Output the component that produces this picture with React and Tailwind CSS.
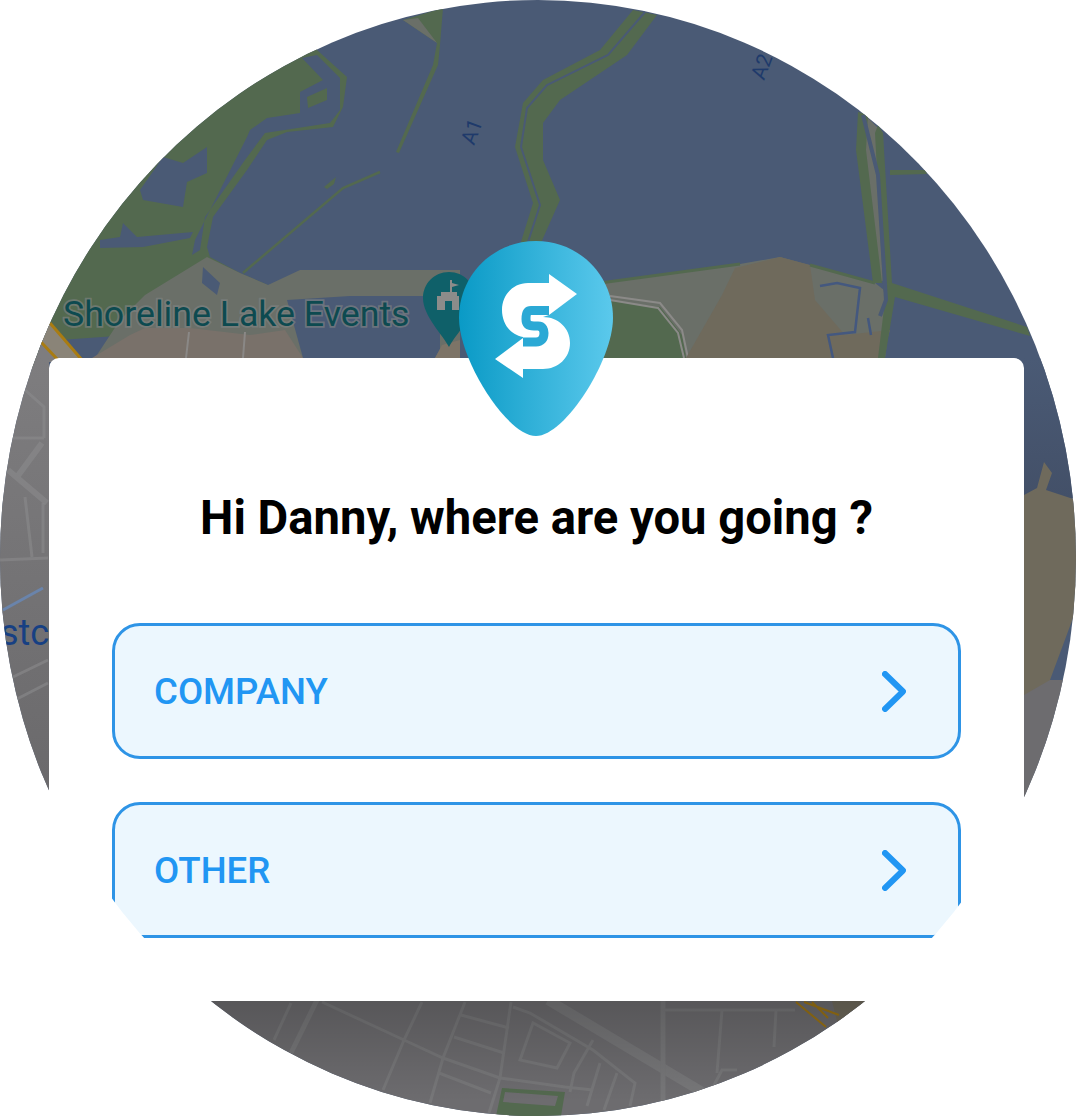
const WATER = '#4a5a75';
const GREEN = '#53694f';
const LAND = '#6a6f68';
const TAN = '#6f6a5c';
const GREY = '#6d6c6f';
const ROAD = '#777779';

function MapLayer() {
  return (
    <svg className="absolute inset-0" width="1076" height="1116" viewBox="0 0 1076 1116">
      <defs>
        <clipPath id="outsideCard">
          <path clipRule="evenodd" d="M0 0H1076V1116H0ZM49 370H1024V1001H49Z" />
        </clipPath>
        <linearGradient id="leftShade" x1="0" y1="0" x2="0" y2="1">
          <stop offset="0" stopColor="#7e7d7f" />
          <stop offset="1" stopColor="#6a696b" />
        </linearGradient>
        <linearGradient id="bottomShade" x1="0" y1="0" x2="0" y2="1">
          <stop offset="0" stopColor="#000" stopOpacity="0.2" />
          <stop offset="1" stopColor="#000" stopOpacity="0" />
        </linearGradient>
        <linearGradient id="rightShade" x1="0" y1="0" x2="0" y2="1">
          <stop offset="0" stopColor={WATER} />
          <stop offset="1" stopColor="#435068" />
        </linearGradient>
      </defs>

      <g clipPath="url(#outsideCard)">
        <rect width="1076" height="1116" fill={WATER} />
        <rect x="1024" y="358" width="52" height="140" fill="url(#rightShade)" />

        {/* upper left marsh */}
        <path fill={GREEN} d="M0 0H317V50L347 77L343 107L333 127L287 132L267 140L247 170L213 217L207 247L210 257L240 273L268 285L200 330L60 340L0 400Z" />
        <path fill={WATER} d="M302 58L323 80L300 92V113L267 118L250 130L247 137L215 200L195 240L192 255L200 250L205 217L245 160L265 133L330 123L340 110L340 78L317 55Z" />
        <path fill={GREEN} d="M307 97L327 88L327 100L308 108Z" />
        <path fill={WATER} d="M140 190L163 157L183 163L207 147V173L187 182L183 207L143 200Z" />
        <path fill={WATER} d="M100 240L120 237L123 223L137 237L193 232L190 238L143 247L100 248Z" />

        {/* channels */}
        <path fill={GREEN} d="M633 10L600 50L543 80L523 103L515 147L533 203L520 245H540L560 200L543 160L543 123L560 100L627 55L657 15Z" />
        <path fill="none" stroke={WATER} strokeWidth="2" d="M645 12L608 55L547 85L527 108L521 147L540 205L527 245" />
        <path fill={GREEN} d="M403 20L443 8L440 45L438 65L399 153L396 152L433 65L437 43Z" />
        <path fill={LAND} d="M403 20L418 18L437 43Z" />
        <path fill="none" stroke={GREEN} strokeWidth="2.5" d="M380 172L343 188L243 273" />
        <path fill={GREEN} d="M324 187L336 177L334 184L327 189Z" />

        {/* shore */}
        <path fill={LAND} d="M207 257L240 273L268 285L300 270L460 270V358H95L120 320L145 295Z" />
        <path fill={WATER} d="M203 267L220 283L217 295L202 283Z" />
        <path fill="#79716a" d="M92 358L130 335L145 328L190 328L250 335L285 330L303 358Z" />
        <path fill={WATER} d="M287 300L350 296L440 296V350L435 358H303Z" />
        <path fill="#7d7467" d="M435 358L442 345L460 340V358Z" />
        <path fill="none" stroke="#8a8886" strokeWidth="2" d="M189 332L186 358M245 332L243 358" />

        <path fill="#7e7d7f" d="M0 320L50 323L85 362H0Z" />
        <path fill="#8a8478" d="M50 323L82 360H58L41 342Z" />
        <path fill="none" stroke="#a97c12" strokeWidth="3" d="M50 323L82 360M41 342L58 360" />

        {/* right of the logo */}
        <path fill={LAND} d="M600 283L740 264L780 257L875 283L893 297L885 358H600Z" />
        <path fill={GREEN} d="M606 300L660 307L682 335L686 358H600Z" />
        <path fill="none" stroke="#8b8a88" strokeWidth="2" d="M610 296L660 303L682 330L688 358" />
        <path fill="none" stroke="#8b8a88" strokeWidth="2" d="M610 300L658 308L678 333L684 358" />
        <path fill={TAN} d="M686 358L722 295L735 268L780 257L810 265L815 300L845 335L890 330L882 358Z" />
        <path fill="none" stroke={GREEN} strokeWidth="3" d="M600 283L740 264M810 265L875 283" />
        <path fill={LAND} d="M865 115L883 133L885 280L875 283L865 180Z" />
        <path fill={GREEN} d="M858 112L856 150L873 283L882 283L866 150L868 115Z" />
        <path fill={GREEN} d="M878 125L883 133L892 283L1027 327L1030 336L895 297L885 358H878L885 300L883 285L875 133Z" />
        <path fill="none" stroke={WATER} strokeWidth="4" d="M863 115L878 175L886 300L880 316" />
        <path fill={GREEN} d="M890 170L925 170L927 174L890 175Z" />
        <path fill="none" stroke="#44587f" strokeWidth="2.5" d="M820 286L837 283L860 288L855 332L828 335L833 358M868 318L871 335" />

        {/* right edge beside the card */}
        <path fill={GREY} d="M1024 680H1076V1116H1024Z" />
        <path fill={TAN} d="M1024 495L1037 488L1044 462L1052 473L1046 490L1076 500V610L1050 680L1024 695Z" />

        {/* left edge */}
        <path fill="url(#leftShade)" d="M0 358H49V800H0Z" />
        <g fill="none" stroke="#8a8a8c" strokeOpacity="0.6">
          <path strokeWidth="6" d="M8 470L47 503M42 443L17 477" />
          <path strokeWidth="3" d="M25 390L44 407V438M10 438H44M25 497L32 557M43 503V553M0 560L48 558M13 677L48 660M15 700L48 683" />
        </g>
        <path fill="none" stroke="#6a84ab" strokeWidth="3" d="M3 610L43 588" />

        {/* bottom streets */}
        <rect x="0" y="1001" width="1076" height="115" fill={GREY} />
        <g fill="none" stroke={ROAD}>
          <path strokeWidth="10" d="M548 1000L704 1093" />
          <path strokeWidth="5" d="M663 1000V1106M317 1000L291 1053" />
          <path strokeWidth="3" d="M663 1010H795M722 1010L717 1073M776 1010L774 1047M713 1087L722 1070H737M322 1002L404 1040L443 1058L500 1078L565 1087L593 1090M422 1002L404 1040L383 1090M465 1002L443 1058L430 1103M511 1002L500 1078L489 1113M461 1015L509 1028M454 1037L504 1053M439 1073L491 1093M513 1007L530 1013L593 1050L635 1083L630 1106M533 1023L520 1060L557 1068L570 1043ZM593 1040L574 1073L570 1092M600 1063L587 1106M617 1073L604 1110M291 1003L274 1040" />
        </g>
        <path fill={GREEN} fillRule="evenodd" d="M502 1088L565 1092L561 1116H496ZM505 1092L503 1102L555 1106L558 1096Z" />
        <path fill={TAN} d="M832 1001H870L838 1025Z" />
        <path fill="none" stroke="#9c7414" strokeWidth="2" d="M796 1002L826 1027M804 1002L839 1015M812 1002L828 1018" />
        <rect x="0" y="1001" width="1076" height="100" fill="url(#bottomShade)" />

        {/* place pin */}
        <path fill="#0f6069" d="M449 272C464 272 475 284 475 298C475 316 455 335 449 347C443 335 423 316 423 298C423 284 434 272 449 272Z" />
        <path fill="#8c8c8a" d="M450 280H452V283L459 285L452 287V292H457V296H459V310H437V296H441V292H450Z" />
        <rect x="445" y="301" width="7" height="9" fill="#0f6069" />

        {/* labels */}
        <g fontFamily="Roboto, sans-serif">
          <text x="63" y="326" fontSize="35.7" fill="#0d4a50" stroke="#7f8383" strokeOpacity="0.65" strokeWidth="3.5" paintOrder="stroke">Shoreline Lake Events</text>
          <text x="0" y="645" fontSize="36" fill="#174083">stc</text>
          <text transform="translate(474 146) rotate(-70)" fontSize="21" fill="#1f3a6b">A1</text>
          <text transform="translate(764 81) rotate(-70)" fontSize="21" fill="#1f3a6b">A2</text>
        </g>
      </g>
    </svg>
  );
}

function Logo() {
  return (
    <svg className="absolute left-[459px] top-[241px]" width="154" height="195" viewBox="459 241 154 195">
      <defs>
        <linearGradient id="pinFill" x1="0" y1="0" x2="1" y2="0">
          <stop offset="0" stopColor="#0a9ac6" />
          <stop offset="1" stopColor="#5bc9ec" />
        </linearGradient>
      </defs>
      <path fill="url(#pinFill)" d="M536 241C579 241 613 275 613 318C613 360 565 436 536 436C507 436 459 360 459 318C459 275 493 241 536 241Z" />
      <path fill="#fff" d="M549 283V274L577 294L549 315L543 317C558 317 570 328 570 343C570 358 558 369 543 369H523V378L495 359L523 338V337C510 335 502 323 502 310C502 295 513 283 528 283Z" />
      <path fill="none" stroke="#2ba9d5" strokeWidth="9" d="M549 310.5H531C526 310.5 526 316 526 319C526 325 530 326 534 326H538C543 326 544 330 544 333C544 339 541 342 536 342H523" />
    </svg>
  );
}

function Option({ label }) {
  return (
    <button className="flex h-[136px] w-full items-center justify-between rounded-[28px] border-[3px] border-[#2e94e6] bg-[#ecf7fe] pl-[39px] pr-[52px] text-[36.6px] font-medium text-[#2196f3]">
      <span className="pt-[2px]">{label}</span>
      <svg width="24" height="41" viewBox="0 0 24 41" fill="none" stroke="#2196f3" strokeWidth="6" strokeLinecap="round" strokeLinejoin="round">
        <path d="M3 3L21 20.5L3 38" />
      </svg>
    </button>
  );
}

export default function App() {
  return (
    <div className="relative h-[1116px] w-[1076px] overflow-hidden rounded-[50%] font-['Roboto',sans-serif]">
      <MapLayer />
      <div className="absolute left-[49px] top-[358px] h-[643px] w-[975px] rounded-t-[10px] bg-white px-[63px] pt-[134px]">
        <h1 className="text-center text-[47.2px] font-bold leading-[52px] text-black">Hi Danny, where are you going ?</h1>
        <div className="mt-[79px] flex flex-col gap-[43px]">
          <Option label="COMPANY" />
          <Option label="OTHER" />
        </div>
      </div>
      <Logo />
    </div>
  );
}
